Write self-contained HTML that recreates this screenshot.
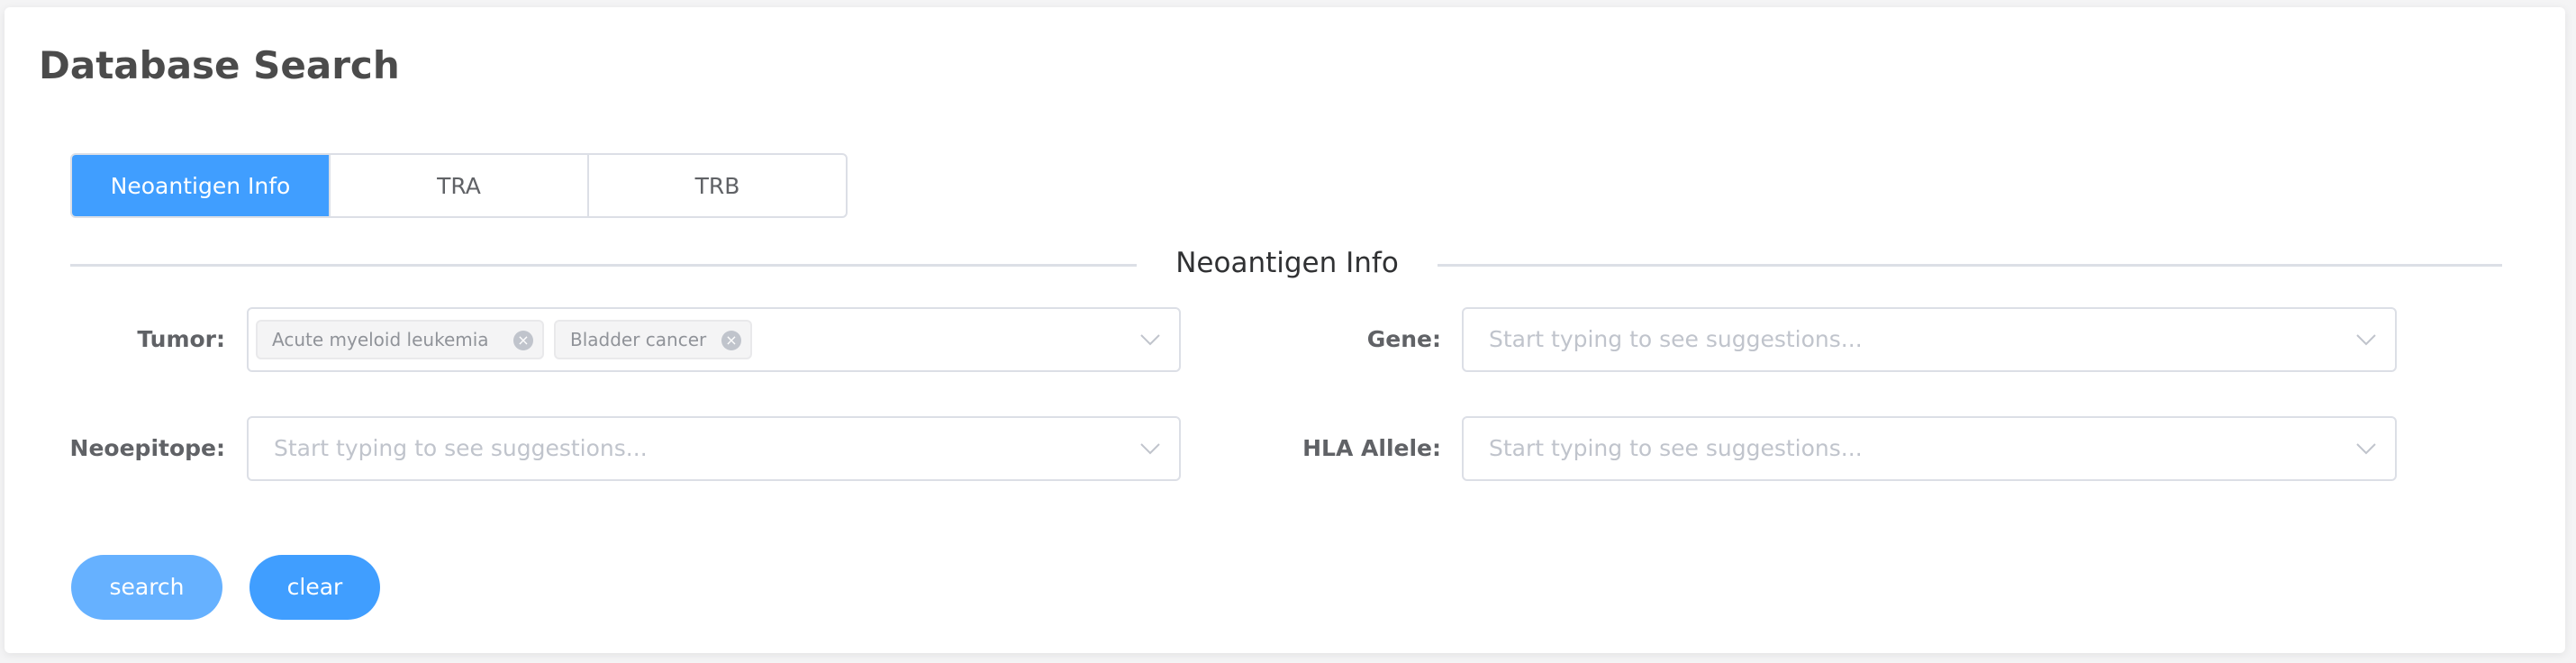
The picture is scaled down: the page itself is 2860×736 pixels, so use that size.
<!DOCTYPE html>
<html><head><meta charset="utf-8"><style>
*{box-sizing:border-box;margin:0;padding:0}
body{width:2860px;height:736px;background:#f4f4f5;font-family:"DejaVu Sans","Liberation Sans",sans-serif;position:relative;overflow:hidden}
.card{position:absolute;left:5px;top:8px;width:2843px;height:717px;background:#fff;border-radius:6px;box-shadow:0 2px 10px rgba(0,0,0,.08)}
.a{position:absolute}
h1{position:absolute;left:43px;top:48px;font-size:42px;font-weight:bold;color:#4b4b4b;line-height:50px}
.tabs{left:78px;top:170px;width:863px;height:72px;border:2px solid #dcdfe6;border-radius:6px;display:flex;overflow:hidden}
.tab{flex:1;display:flex;align-items:center;justify-content:center;font-size:25px;color:#606266;border-left:2px solid #dcdfe6}
.tab:first-child{border-left:none;background:#409eff;color:#fff}
.line{height:3px;background:#dcdfe6;top:293px}
.lbl{font-size:25px;font-weight:bold;color:#606266;text-align:right;line-height:72px}
.box{height:72px;border:2px solid #dcdfe6;border-radius:6px;background:#fff}
.ph{position:absolute;left:28px;top:0;line-height:68px;font-size:25px;color:#c0c4cc}
.chev{position:absolute;right:20px;top:26px;width:24px;height:16px}
.tag{position:absolute;top:12px;height:44px;background:#f4f4f5;border:2px solid #e9e9eb;border-radius:6px;font-size:20px;color:#909399;line-height:40px;padding-left:16px;white-space:nowrap}
.x{position:absolute;right:10px;top:10px;width:22px;height:22px;border-radius:50%;background:#c0c4cc;color:#fff;font-size:16px;line-height:22px;text-align:center}
.btn{top:616px;height:72px;border-radius:36px;color:#fff;font-size:25px;line-height:72px;text-align:center}
</style></head><body>
<div class="card"></div>
<h1>Database Search</h1>
<div class="a tabs"><div class="tab">Neoantigen Info</div><div class="tab">TRA</div><div class="tab">TRB</div></div>
<div class="a line" style="left:78px;width:1184px"></div>
<div class="a line" style="left:1596px;width:1182px"></div>
<div class="a" style="left:1262px;width:334px;top:272px;text-align:center;font-size:31px;color:#303133;line-height:40px">Neoantigen Info</div>

<div class="a lbl" style="left:40px;width:210px;top:341px">Tumor:</div>
<div class="a box" style="left:274px;top:341px;width:1037px">
<div class="tag" style="left:8px;width:320px">Acute myeloid leukemia<span class="x">×</span></div>
<div class="tag" style="left:339px;width:220px">Bladder cancer<span class="x">×</span></div>
<svg class="chev" viewBox="0 0 24 16"><path d="M2 3 L12 13 L22 3" fill="none" stroke="#c0c4cc" stroke-width="2"/></svg></div>

<div class="a lbl" style="left:20px;width:230px;top:462px">Neoepitope:</div>
<div class="a box" style="left:274px;top:462px;width:1037px"><span class="ph">Start typing to see suggestions...</span>
<svg class="chev" viewBox="0 0 24 16"><path d="M2 3 L12 13 L22 3" fill="none" stroke="#c0c4cc" stroke-width="2"/></svg></div>

<div class="a lbl" style="left:1380px;width:220px;top:341px">Gene:</div>
<div class="a box" style="left:1623px;top:341px;width:1038px"><span class="ph">Start typing to see suggestions...</span>
<svg class="chev" viewBox="0 0 24 16"><path d="M2 3 L12 13 L22 3" fill="none" stroke="#c0c4cc" stroke-width="2"/></svg></div>

<div class="a lbl" style="left:1380px;width:220px;top:462px">HLA Allele:</div>
<div class="a box" style="left:1623px;top:462px;width:1038px"><span class="ph">Start typing to see suggestions...</span>
<svg class="chev" viewBox="0 0 24 16"><path d="M2 3 L12 13 L22 3" fill="none" stroke="#c0c4cc" stroke-width="2"/></svg></div>

<div class="a btn" style="left:79px;width:168px;background:#66b1ff">search</div>
<div class="a btn" style="left:277px;width:145px;background:#409eff">clear</div>
</body></html>
